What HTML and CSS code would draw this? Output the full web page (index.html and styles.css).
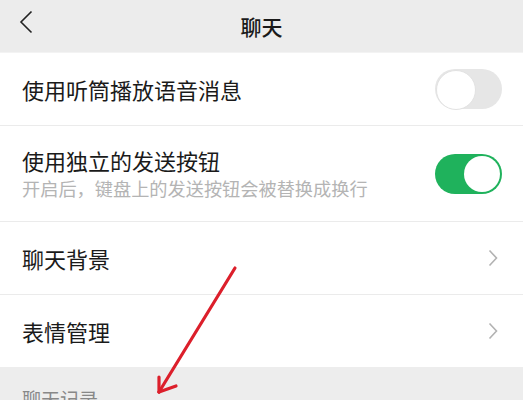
FILE: index.html
```html
<!DOCTYPE html>
<html>
   <head>
      <meta charset="UTF-8">
      <meta name="viewport" content="width=device-width, initial-scale=1.0"/>
      <title>聊天</title>
      <link rel="stylesheet" href="styles.css">
   </head>
   <body>
      <header class="nav-bar">
         <svg class="back-icon" width="14" height="24" viewBox="0 0 14 24">
            <path d="M12.5 1.5 L2 12 L12.5 22.5" fill="none" stroke="#222" stroke-width="1.6"/>
         </svg>
         <h1 class="nav-title">聊天</h1>
      </header>

      <ul class="settings">
         <li class="item">
            <div class="item-text">
               <span class="item-title">使用听筒播放语音消息</span>
            </div>
            <span class="switch"></span>
         </li>
         <li class="item item-tall">
            <div class="item-text">
               <span class="item-title">使用独立的发送按钮</span>
               <span class="item-desc">开启后，键盘上的发送按钮会被替换成换行</span>
            </div>
            <span class="switch switch-on"></span>
         </li>
         <li class="item">
            <div class="item-text">
               <span class="item-title">聊天背景</span>
            </div>
            <svg class="chevron" width="10" height="18" viewBox="0 0 10 18">
               <path d="M1.5 1.5 L8.5 9 L1.5 16.5" fill="none" stroke="#b2b2b2" stroke-width="1.6"/>
            </svg>
         </li>
         <li class="item">
            <div class="item-text">
               <span class="item-title">表情管理</span>
            </div>
            <svg class="chevron" width="10" height="18" viewBox="0 0 10 18">
               <path d="M1.5 1.5 L8.5 9 L1.5 16.5" fill="none" stroke="#b2b2b2" stroke-width="1.6"/>
            </svg>
         </li>
      </ul>

      <div class="section-title">聊天记录</div>

      <!-- hand drawn annotation arrow -->
      <svg class="mark-arrow" width="523" height="400" viewBox="0 0 523 400">
         <g fill="none" stroke="#dc1f2b" stroke-width="3.2" stroke-linecap="round" stroke-linejoin="round">
            <path d="M235 268 L159 392"/>
            <path d="M159 392 L159 377"/>
            <path d="M159 392 L176 386"/>
         </g>
      </svg>
   </body>
</html>
```

FILE: styles.css
```css
*
{
   box-sizing: border-box;
}

body
{
   margin: 0;
   position: relative;
   height: 400px;
   overflow: hidden;
   background: #ededed;
   font-family: "Noto Sans CJK SC", "Noto Sans", sans-serif;
   color: #1a1a1a;
}

.nav-bar
{
   position: relative;
   height: 53px;
   display: flex;
   align-items: center;
   justify-content: center;
   background: #ececec;
   border-bottom: 1px solid #f3f3f3;
}

.back-icon
{
   position: absolute;
   left: 19px;
   top: 10px;
}

.nav-title
{
   margin: 0;
   font-size: 21px;
   font-weight: 500;
   color: #1a1a1a;
}

.settings
{
   list-style: none;
   margin: 0;
   padding: 0;
   background: #fff;
}

.item
{
   display: flex;
   align-items: center;
   min-height: 72px;
   padding: 0 21px 0 22px;
}

.item + .item
{
   border-top: 1px solid #ebebeb;
   min-height: 73px;
}

.item-tall
{
   min-height: 96px !important;
   padding-top: 19px;
   padding-bottom: 19px;
}

.item-text
{
   flex: 1;
   display: flex;
   flex-direction: column;
}

.item-title
{
   font-size: 22px;
   line-height: 30px;
   color: #1a1a1a;
}

.item-desc
{
   font-size: 18.2px;
   line-height: 27px;
   color: #b4b4b4;
}

.switch
{
   position: relative;
   width: 67px;
   height: 40px;
   border-radius: 20px;
   background: #e6e6e6;
}

.switch::after
{
   content: "";
   position: absolute;
   top: 1px;
   left: 1px;
   width: 38px;
   height: 38px;
   border-radius: 50%;
   background: #fff;
   border: 1px solid #e2e2e2;
}

.switch-on
{
   background: #1fb25c;
}

.switch-on::after
{
   left: auto;
   right: 2px;
   top: 2px;
   width: 36px;
   height: 36px;
   border: none;
}

.chevron
{
   margin-right: 4px;
}

.section-title
{
   padding: 19px 22px 0;
   font-size: 19px;
   line-height: 26px;
   color: #888;
}

.mark-arrow
{
   position: absolute;
   left: 0;
   top: 0;
   pointer-events: none;
}
```
